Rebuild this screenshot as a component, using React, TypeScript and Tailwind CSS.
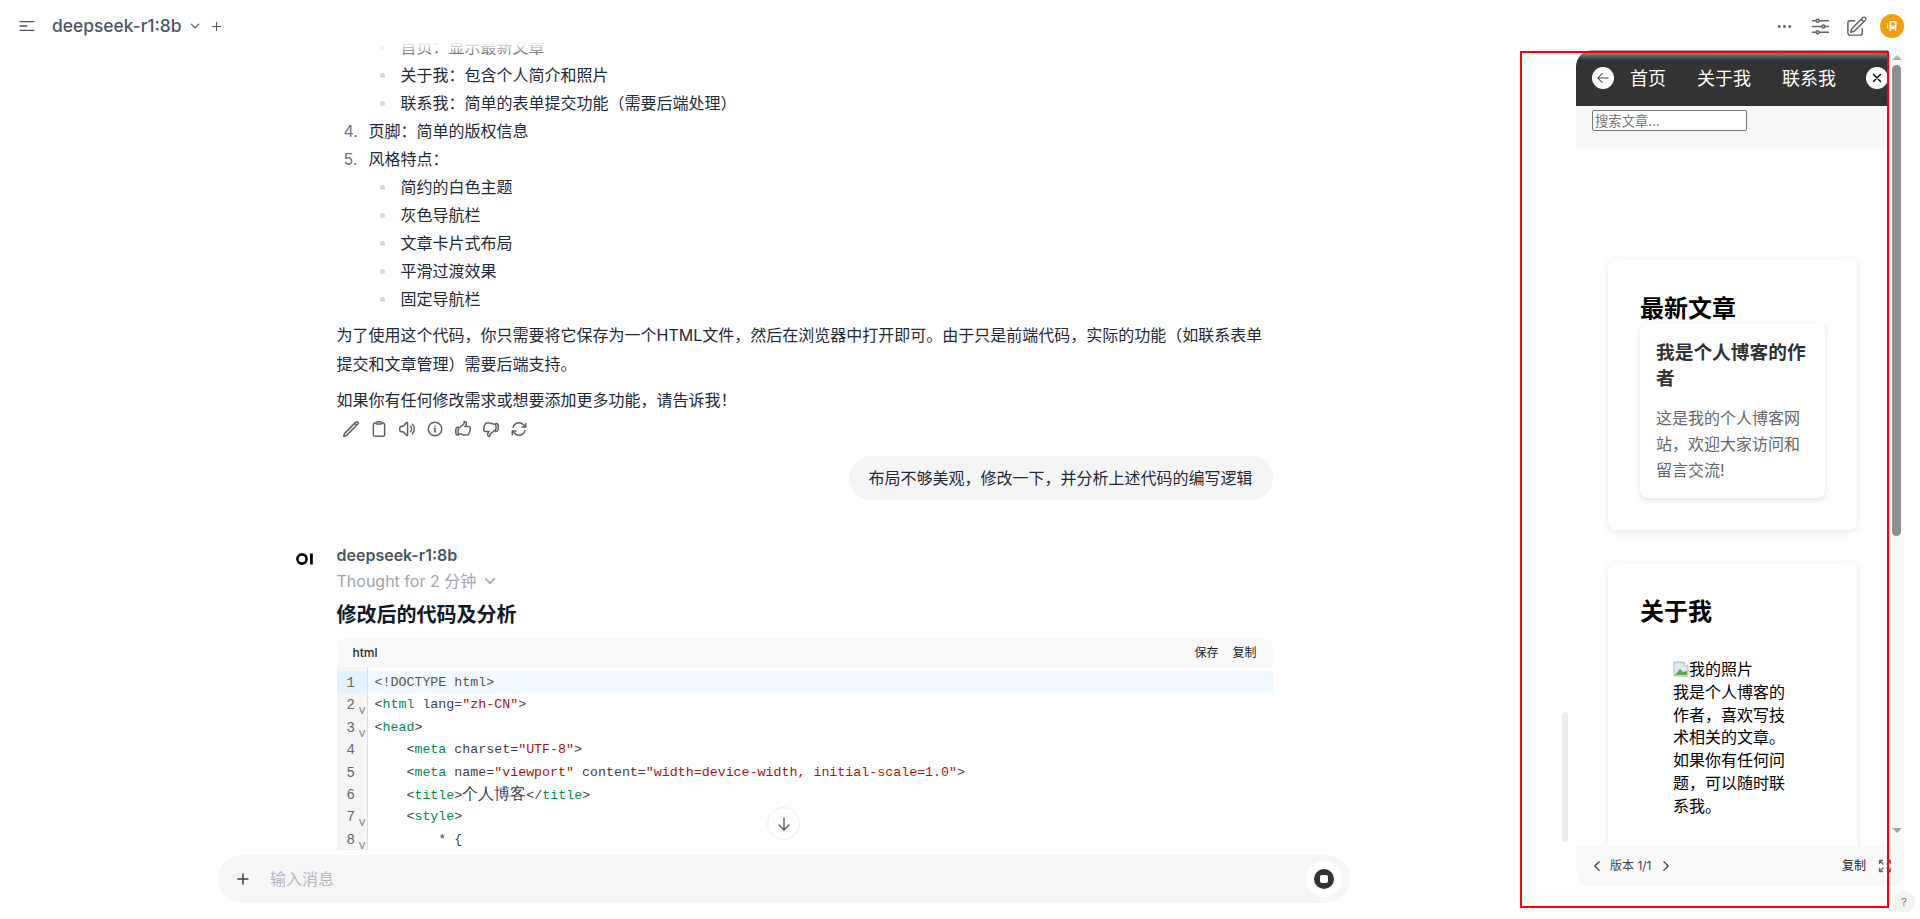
import type { ReactNode } from 'react';
import {
  HiOutlineBars3CenterLeft,
  HiOutlineChevronDown,
  HiOutlinePlus,
  HiOutlineEllipsisHorizontal,
  HiOutlineAdjustmentsHorizontal,
  HiOutlinePencilSquare,
  HiOutlinePencil,
  HiOutlineClipboard,
  HiOutlineSpeakerWave,
  HiOutlineInformationCircle,
  HiOutlineHandThumbUp,
  HiOutlineHandThumbDown,
  HiOutlineArrowPath,
  HiOutlineArrowDown,
  HiOutlineArrowLeft,
  HiOutlineXMark,
  HiOutlineChevronLeft,
  HiOutlineChevronRight,
  HiOutlineArrowsPointingOut,
} from 'react-icons/hi2';

const Tag = ({ children }: { children: ReactNode }) => <span className="text-[#008855]">{children}</span>;
const Str = ({ children }: { children: ReactNode }) => <span className="text-[#aa1111]">{children}</span>;
const Cjk = ({ children }: { children: ReactNode }) => <span className="text-[15.8px]">{children}</span>;

const codeLines: { fold?: boolean; body: ReactNode }[] = [
  { body: <span className="text-[#555]">{'<!DOCTYPE html>'}</span> },
  { fold: true, body: <>{'<'}<Tag>html</Tag>{' lang='}<Str>"zh-CN"</Str>{'>'}</> },
  { fold: true, body: <>{'<'}<Tag>head</Tag>{'>'}</> },
  { body: <>{'    <'}<Tag>meta</Tag>{' charset='}<Str>"UTF-8"</Str>{'>'}</> },
  { body: <>{'    <'}<Tag>meta</Tag>{' name='}<Str>"viewport"</Str>{' content='}<Str>"width=device-width, initial-scale=1.0"</Str>{'>'}</> },
  { body: <>{'    <'}<Tag>title</Tag>{'>'}<Cjk>个人博客</Cjk>{'</'}<Tag>title</Tag>{'>'}</> },
  { fold: true, body: <>{'    <'}<Tag>style</Tag>{'>'}</> },
  { fold: true, body: <>{'        * {'}</> },
];

const subItems1 = ['首页：显示最新文章', '关于我：包含个人简介和照片', '联系我：简单的表单提交功能（需要后端处理）'];
const subItems2 = ['简约的白色主题', '灰色导航栏', '文章卡片式布局', '平滑过渡效果', '固定导航栏'];

const SubList = ({ items }: { items: string[] }) => (
  <ul className="pl-[64px]">
    {items.map((item) => (
      <li key={item} className="relative h-[28px] leading-[28px]">
        <span className="absolute left-[-21px] top-[12px] h-[5px] w-[5px] rounded-full bg-[#d1d5db]" />
        {item}
      </li>
    ))}
  </ul>
);

const Step = ({ n, text }: { n: number; text: string }) => (
  <div className="flex h-[28px] items-center pl-[7px] leading-[28px]">
    <span className="w-[25px] text-[#6b7280]">{n}.</span>
    <span>{text}</span>
  </div>
);

const actionIcons = [
  HiOutlinePencil,
  HiOutlineClipboard,
  HiOutlineSpeakerWave,
  HiOutlineInformationCircle,
  HiOutlineHandThumbUp,
  HiOutlineHandThumbDown,
  HiOutlineArrowPath,
];

const Header = () => (
  <header className="absolute inset-x-0 top-0 z-10 flex h-[60px] items-start justify-between bg-linear-to-b from-white from-70% to-white/0 pl-[17px] pr-[10px] pt-[14px]">
    <div className="flex h-[24px] items-center text-[#4b5563]">
      <HiOutlineBars3CenterLeft className="h-[20px] w-[20px]" strokeWidth={1.7} />
      <span className="ml-[15px] text-[17.4px] font-medium">deepseek-r1:8b</span>
      <HiOutlineChevronDown className="ml-[7px] h-[12px] w-[12px]" strokeWidth={2.5} />
      <HiOutlinePlus className="ml-[9px] h-[13px] w-[13px]" strokeWidth={2} />
    </div>
    <div className="flex h-[24px] items-center text-[#5f6368]">
      <div className="flex w-[36px] justify-center">
        <HiOutlineEllipsisHorizontal className="h-[21px] w-[21px]" strokeWidth={1.8} />
      </div>
      <div className="flex w-[36px] justify-center">
        <HiOutlineAdjustmentsHorizontal className="h-[23px] w-[23px]" strokeWidth={1.6} />
      </div>
      <div className="flex w-[36px] justify-center">
        <HiOutlinePencilSquare className="h-[23px] w-[23px]" strokeWidth={1.5} />
      </div>
      <div className="flex w-[36px] justify-center">
        <div className="flex h-[24px] w-[24px] items-center justify-center rounded-full bg-[#f59e0b]">
          <svg viewBox="0 0 12 12" className="h-[12px] w-[12px]" fill="none">
            <rect x="3.5" y="1" width="7" height="8" rx="1.2" fill="white" />
            <rect x="5" y="2.5" width="4" height="3" fill="#f59e0b" />
            <path d="M1.5 3.5v5" stroke="white" strokeWidth="1.2" />
            <path d="M4.5 9v2M9.5 9v2" stroke="white" strokeWidth="1.4" />
          </svg>
        </div>
      </div>
    </div>
  </header>
);

const Chat = () => (
  <div className="min-h-0 flex-1 overflow-hidden">
    <div className="mx-auto w-[977px] pt-[33px] text-[16px] text-[#1f2937]">
      <div className="pl-[41px]">
        <SubList items={subItems1} />
        <Step n={4} text="页脚：简单的版权信息" />
        <Step n={5} text="风格特点：" />
        <SubList items={subItems2} />
        <p className="mt-[8px] w-[936px] leading-[29px]">
          为了使用这个代码，你只需要将它保存为一个HTML文件，然后在浏览器中打开即可。由于只是前端代码，实际的功能（如联系表单提交和文章管理）需要后端支持。
        </p>
        <p className="mt-[7px] leading-[29px]">如果你有任何修改需求或想要添加更多功能，请告诉我！</p>
        <div className="mt-[6px] flex items-center pl-[5px] text-[#5f6368]">
          {actionIcons.map((Icon, i) => (
            <div key={i} className="flex h-[16px] w-[28px] items-center">
              <Icon className="h-[18px] w-[18px] shrink-0" strokeWidth={2} />
            </div>
          ))}
        </div>
        <div className="mt-[19px] flex justify-end">
          <div className="flex h-[44px] items-center rounded-[22px] bg-[#f5f5f6] pl-[19px] pr-[20px]">
            布局不够美观，修改一下，并分析上述代码的编写逻辑
          </div>
        </div>
      </div>

      <div className="mt-[44px] flex">
        <div className="w-[41px] pt-[9px]">
          <svg viewBox="0 0 18 12" className="h-[12px] w-[18px]" fill="none">
            <circle cx="6" cy="6" r="4.6" stroke="#000" strokeWidth="2.6" />
            <rect x="14" y="0.5" width="2.8" height="11" fill="#000" />
          </svg>
        </div>
        <div className="w-[936px]">
          <div className="h-[24px] font-semibold leading-[22px] text-[#4b5563]">deepseek-r1:8b</div>
          <div className="flex h-[26px] items-center text-[#a1a4a9]">
            Thought for 2 分钟
            <HiOutlineChevronDown className="ml-[7px] h-[14px] w-[14px]" strokeWidth={2.8} />
          </div>
          <h3 className="mt-[7px] text-[20px] font-bold leading-[28px] text-[#111827]">修改后的代码及分析</h3>
          <div className="mt-[10px]">
            <div className="flex h-[28px] items-center justify-between rounded-t-lg bg-[#f9f9f9] pl-[16px] pr-[16px] text-[12px] text-[#1f2937]">
              <span className="font-medium">html</span>
              <div className="flex gap-[14px] text-[#222]">
                <span>保存</span>
                <span>复制</span>
              </div>
            </div>
            <div className="flex font-['Liberation_Mono',monospace] text-[13.3px] text-[#3a4250]">
              <div className="w-[31px] border-r border-[#dddddd] bg-[#f5f5f5] pt-[4px] text-[14px] text-[#666]">
                {codeLines.map((line, i) => (
                  <div key={i} className={`relative h-[22.4px] pl-[10px] leading-[24px] ${i === 0 ? 'bg-[#e2f2ff]' : ''}`}>
                    {i + 1}
                    {line.fold && <span className="absolute left-[22px] top-[6px] text-[12px] text-[#888]">v</span>}
                  </div>
                ))}
              </div>
              <div className="flex-1 pt-[4px]">
                {codeLines.map((line, i) => (
                  <div key={i} className={`h-[22.4px] whitespace-pre pl-[7px] leading-[24px] ${i === 0 ? 'bg-[#f0f9ff]' : ''}`}>
                    {line.body}
                  </div>
                ))}
              </div>
            </div>
          </div>
        </div>
      </div>
    </div>
  </div>
);

const Composer = () => (
  <div className="h-[64px] shrink-0">
    <div className="mx-auto flex h-[48px] w-[1132px] items-center rounded-[24px] bg-[#f6f6f6] pl-[17px] pr-[8px]">
      <HiOutlinePlus className="h-[16px] w-[16px] text-[#374151]" strokeWidth={2.2} />
      <input placeholder="输入消息" className="ml-[19px] flex-1 bg-transparent text-[16px] outline-none placeholder:text-[#b4b8be]" />
      <div className="flex h-[36px] w-[36px] items-center justify-center rounded-full bg-white">
        <div className="flex h-[20px] w-[20px] items-center justify-center rounded-full bg-[#333]">
          <div className="h-[8px] w-[8px] rounded-[2px] bg-white" />
        </div>
      </div>
    </div>
  </div>
);

const BrokenImage = () => (
  <svg viewBox="0 0 16 16" className="h-[16px] w-[16px] shrink-0" fill="none">
    <path d="M1 1h10l4 4v10H1z" fill="#dfeaf8" stroke="#b5b5b5" />
    <path d="M11 1v4h4" fill="#fff" stroke="#b5b5b5" />
    <path d="M2 14l5-6 3 3 4-1v4z" fill="#5fa84a" />
  </svg>
);

const Preview = () => (
  <div className="min-w-0 flex-1 overflow-hidden bg-white">
    <nav className="flex h-[56px] items-center rounded-tl-2xl bg-[#333333] pl-[16px] text-[18px] text-white">
      <div className="flex h-[22px] w-[22px] items-center justify-center rounded-full bg-white text-[#444]">
        <HiOutlineArrowLeft className="h-[14px] w-[14px]" strokeWidth={1.8} />
      </div>
      <span className="ml-[16px]">首页</span>
      <span className="ml-[31px]">关于我</span>
      <span className="ml-[31px]">联系我</span>
      <div className="ml-[30px] flex h-[22px] w-[22px] items-center justify-center rounded-full bg-white text-black">
        <HiOutlineXMark className="h-[14px] w-[14px]" strokeWidth={2.4} />
      </div>
    </nav>
    <div className="h-[41px] bg-[#f7f7f7] pl-[16px] pt-[4px] shadow-[0_1px_3px_rgba(0,0,0,0.04)]">
      <input
        placeholder="搜索文章..."
        className="block h-[21px] w-[155px] rounded-[2px] border border-[#767676] bg-white px-[2px] text-[13.33px] placeholder:text-[#757575]"
      />
    </div>
    <div className="ml-[32px] mt-[112px] w-[249px] rounded-lg bg-white p-[32px] shadow-[0_2px_8px_rgba(0,0,0,0.1)]">
      <h2 className="h-[32px] text-[24px] font-bold leading-[35px] text-black">最新文章</h2>
      <div className="w-[185px] rounded-lg bg-white px-[16px] pb-[15px] pt-[17px] shadow-[0_2px_6px_rgba(0,0,0,0.12)]">
        <h3 className="text-[18.72px] font-bold leading-[26px] text-[#333]">我是个人博客的作者</h3>
        <p className="mt-[13px] leading-[26px] text-[#666]">这是我的个人博客网站，欢迎大家访问和留言交流!</p>
      </div>
    </div>
    <div className="ml-[32px] mt-[33px] h-[400px] w-[249px] rounded-lg bg-white p-[32px] shadow-[0_2px_8px_rgba(0,0,0,0.1)]">
      <h2 className="h-[32px] text-[24px] font-bold leading-[34px] text-black">关于我</h2>
      <div className="ml-[33px] mt-[31px] w-[112px] leading-[22.8px] text-black">
        <div className="flex items-center">
          <BrokenImage />
          <span>我的照片</span>
        </div>
        <p>我是个人博客的作者，喜欢写技术相关的文章。如果你有任何问题，可以随时联系我。</p>
      </div>
    </div>
  </div>
);

const PreviewScrollbar = () => (
  <div className="flex w-[16px] shrink-0 flex-col items-center bg-[#fafafa] pl-[1px] pt-[5px]">
    <div className="h-0 w-0 border-x-[5px] border-b-[5px] border-x-transparent border-b-[#a3a3a3]" />
    <div className="mt-[5px] h-[471px] w-[9px] rounded-full bg-[#8e8e8e]" />
    <div className="mt-[292px] h-0 w-0 border-x-[5px] border-t-[5px] border-x-transparent border-t-[#a3a3a3]" />
  </div>
);

const ArtifactPanel = () => (
  <aside className="mt-[50px] flex h-[837px] w-[328px] shrink-0 flex-col overflow-hidden rounded-2xl">
    <div className="flex min-h-0 flex-1">
      <Preview />
      <PreviewScrollbar />
    </div>
    <footer className="flex h-[42px] shrink-0 items-center bg-[#f9f9f9] pl-[14px] pr-[11px] text-[12px] text-[#444]">
      <HiOutlineChevronLeft className="h-[14px] w-[14px]" strokeWidth={2.4} />
      <span className="ml-[6px]">版本 1/1</span>
      <HiOutlineChevronRight className="ml-[8px] h-[14px] w-[14px]" strokeWidth={2.4} />
      <span className="ml-auto text-[#222]">复制</span>
      <HiOutlineArrowsPointingOut className="ml-[11px] h-[16px] w-[16px] text-[#666]" strokeWidth={2} />
    </footer>
  </aside>
);

export default function App() {
  return (
    <div className="relative flex h-[919px] w-full overflow-hidden bg-white font-['Inter','Noto_Sans_CJK_SC',sans-serif]">
      <Header />
      <main className="relative flex min-w-0 flex-1 flex-col pr-[8px]">
        <Chat />
        <Composer />
        <button className="absolute left-[767px] top-[807px] flex h-[33px] w-[33px] items-center justify-center rounded-full border border-[#eeeeee] bg-white text-[#555]">
          <HiOutlineArrowDown className="h-[16px] w-[16px]" strokeWidth={2} />
        </button>
        <div className="absolute left-[1562px] top-[712px] h-[130px] w-[6px] rounded-full bg-[#ececec]" />
      </main>
      <ArtifactPanel />
      <div className="w-[16px] shrink-0" />
      <div className="absolute left-[1893px] top-[891px] flex h-[22px] w-[22px] items-center justify-center rounded-full bg-[#f3f3f3] text-[11px] text-[#777]">?</div>
      <div className="pointer-events-none absolute left-[1520px] top-[51px] z-20 h-[857px] w-[369px] border-2 border-[#ff0000]" />
    </div>
  );
}
